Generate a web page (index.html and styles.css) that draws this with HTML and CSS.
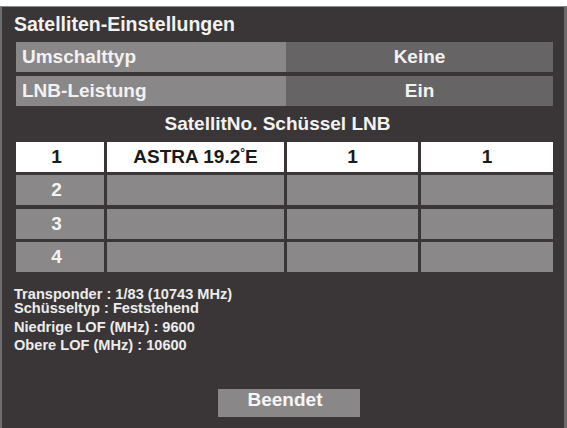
FILE: index.html
```html
<!DOCTYPE html>
<html lang="de">
<head>
<meta charset="utf-8">
<title>Satelliten-Einstellungen</title>
<link rel="stylesheet" href="styles.css">
</head>
<body>
<div class="panel">
  <div class="title">Satelliten-Einstellungen</div>
  <div class="settings">
    <div class="setting">
      <div class="label">Umschalttyp</div>
      <div class="value">Keine</div>
    </div>
    <div class="setting">
      <div class="label">LNB-Leistung</div>
      <div class="value">Ein</div>
    </div>
  </div>
  <div class="table-head">SatellitNo. Schüssel LNB</div>
  <div class="table">
    <div class="cell sel num">1</div>
    <div class="cell sel">ASTRA 19.2<span class="deg">°</span>E</div>
    <div class="cell sel">1</div>
    <div class="cell sel">1</div>
    <div class="cell num">2</div>
    <div class="cell"></div>
    <div class="cell"></div>
    <div class="cell"></div>
    <div class="cell num">3</div>
    <div class="cell"></div>
    <div class="cell"></div>
    <div class="cell"></div>
    <div class="cell num">4</div>
    <div class="cell"></div>
    <div class="cell"></div>
    <div class="cell"></div>
  </div>
  <div class="info">
    <div class="info-tight">
      <div>Transponder : 1/83 (10743 MHz)</div>
      <div>Schüsseltyp : Feststehend</div>
    </div>
    <div class="info-loose">
      <div>Niedrige LOF (MHz) : 9600</div>
      <div>Obere LOF (MHz) : 10600</div>
    </div>
  </div>
  <div class="actions">
    <div class="button">Beendet</div>
  </div>
</div>
</body>
</html>
```

FILE: styles.css
```css
html, body {
  margin: 0;
  padding: 0;
  background: #ffffff;
}

body {
  width: 567px;
  height: 428px;
  overflow: hidden;
  font-family: "Liberation Sans", Arial, sans-serif;
  font-weight: bold;
  color: #f2f2f2;
}

.panel {
  box-sizing: border-box;
  margin-top: 6px;
  height: 422px;
  width: 567px;
  background: #3a3637;
  border-top: 1px solid #8a8a8a;
  border-left: 2px solid #6e6e6e;
  border-right: 3px solid #6a6a6a;
  padding: 6px 11px 0 14px;
}

.title {
  font-size: 19.5px;
  line-height: 22px;
  margin-left: -2px;
}

.settings {
  margin-top: 7px;
  display: flex;
  flex-direction: column;
  gap: 4px;
}

.setting {
  display: flex;
  height: 30px;
  font-size: 19px;
  line-height: 30px;
}

.label {
  width: 270px;
  box-sizing: border-box;
  padding-left: 6px;
  background: #8a8788;
}

.value {
  flex: 1;
  text-align: center;
  background: #676465;
}

.table-head {
  font-size: 19px;
  line-height: 36px;
  text-align: center;
  padding-right: 14px;
}

.table {
  display: grid;
  grid-template-columns: 88px 177px 131px 132px;
  grid-auto-rows: 30px;
  column-gap: 3px;
  row-gap: 3.3px;
}

.cell {
  background: #8b8889;
  font-size: 19px;
  line-height: 30px;
  text-align: center;
  color: #f4f4f4;
}

.cell.num {
  padding-right: 7px;
}

.cell.sel {
  background: #ffffff;
  color: #1a1a1a;
}

.deg {
  font-size: 12px;
  vertical-align: 6px;
  line-height: 0;
}

.info {
  margin-top: 15px;
  margin-left: -2px;
  font-size: 14.6px;
  color: #ececec;
}

.info-tight {
  line-height: 14.5px;
}

.info-loose {
  margin-top: 2px;
  line-height: 18px;
}

.actions {
  margin-top: 35px;
  display: flex;
}

.button {
  margin-left: 202px;
  width: 142px;
  height: 28px;
  box-sizing: border-box;
  background: #8a8788;
  font-size: 19px;
  line-height: 22px;
  padding-bottom: 6px;
  padding-right: 8px;
  text-align: center;
  color: #f6f6f6;
}
```
